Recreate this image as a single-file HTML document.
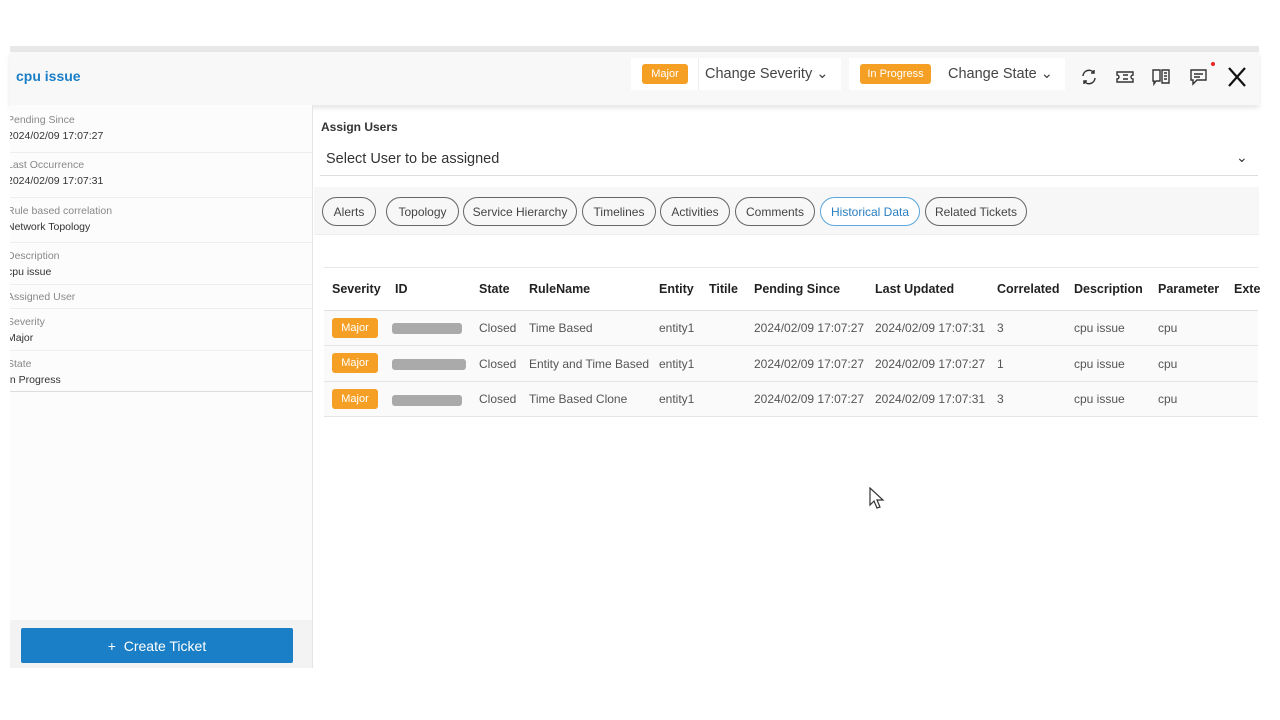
<!DOCTYPE html><html><head><style>
*{margin:0;padding:0;box-sizing:border-box}
body{width:1280px;height:720px;background:#fff;font-family:"Liberation Sans",sans-serif;position:relative;overflow:hidden;color:#333}
.a{position:absolute}
.lab{font-size:10.5px;color:#888;margin-left:-3px}
.val{font-size:10.5px;color:#333;margin-left:-3px}
.row{position:absolute;left:10px;width:302px;border-bottom:1px solid #eee;overflow:hidden}
.pill{position:absolute;top:197px;height:29px;border:1.5px solid #666;border-radius:15px;font-size:12px;color:#444;display:flex;align-items:center;justify-content:center}
.th{position:absolute;top:282px;font-size:12.5px;font-weight:bold;color:#222}
.td{position:absolute;font-size:12px;color:#555}
.badge{position:absolute;background:#f5a024;color:#fff;font-size:11px;border-radius:3px;display:flex;align-items:center;justify-content:center}
.blur{position:absolute;left:392px;height:11px;background:#aaa;border-radius:3px}
</style></head><body>
<div class="a" style="left:10px;top:46px;width:1249px;height:6px;background:#e8e8e8"></div>
<div class="a" style="left:10px;top:52px;width:1249px;height:53px;background:#f8f8f8;box-shadow:0 3px 5px rgba(0,0,0,.1)"></div>
<div class="a" style="left:16px;top:68px;font-size:14px;font-weight:bold;color:#1a7fc6">cpu issue</div>
<div class="a" style="left:631px;top:58px;width:210px;height:32px;background:#fff"></div>
<div class="a" style="left:698px;top:58px;width:1px;height:32px;background:#eee"></div>
<div class="badge" style="left:642px;top:64px;width:46px;height:20px">Major</div>
<div class="a" style="left:705px;top:66px;font-size:14.5px;color:#444">Change Severity ⌄</div>
<div class="a" style="left:849px;top:58px;width:216px;height:32px;background:#fff"></div>
<div class="badge" style="left:860px;top:64px;width:71px;height:20px">In Progress</div>
<div class="a" style="left:948px;top:66px;font-size:14.5px;color:#444">Change State ⌄</div>
<svg class="a" style="left:1080px;top:68px" width="18" height="18" viewBox="0 0 18 18" fill="none" stroke="#333" stroke-width="1.5"><path d="M3 8a6 6 0 0 1 11-3M15 10a6 6 0 0 1-11 3M14 2v3h-3M4 16v-3h3"/></svg>
<svg class="a" style="left:1116px;top:70px" width="18" height="14" viewBox="0 0 18 14" fill="none" stroke="#333" stroke-width="1.4"><path d="M1 2h16v3a2 2 0 0 0 0 4v3H1V9a2 2 0 0 0 0-4z"/><path d="M7 5h5M7 9h5"/></svg>
<svg class="a" style="left:1151px;top:68px" width="20" height="18" viewBox="0 0 20 18" fill="none" stroke="#333" stroke-width="1.4"><path d="M2 2h7v11H5l-2 3v-3H2zM11 2h7v13h-7zM13 5h3M13 8h3M13 11h3"/></svg>
<svg class="a" style="left:1189px;top:68px" width="19" height="18" viewBox="0 0 19 18" fill="none" stroke="#333" stroke-width="1.4"><path d="M2 2h15v10H8l-4 4v-4H2zM5 6h9M5 9h6"/></svg>
<div class="a" style="left:1211px;top:62px;width:4px;height:4px;border-radius:2px;background:#e22"></div>
<svg class="a" style="left:1228px;top:67px" width="18" height="20" viewBox="0 0 18 20" stroke="#111" stroke-width="2.2"><path d="M1 1l16 18M17 1L1 19"/></svg>

<div class="a" style="left:10px;top:105px;width:303px;height:563px;background:#fcfcfc;border-right:1px solid #e5e5e5"></div>
<div class="row" style="top:110px;height:43px"><div class="lab" style="margin-top:4px">Pending Since</div><div class="val" style="margin-top:4px">2024/02/09 17:07:27</div></div>
<div class="row" style="top:153px;height:45px"><div class="lab" style="margin-top:6px">Last Occurrence</div><div class="val" style="margin-top:4px">2024/02/09 17:07:31</div></div>
<div class="row" style="top:198px;height:45px"><div class="lab" style="margin-top:7px">Rule based correlation</div><div class="val" style="margin-top:4px">Network Topology</div></div>
<div class="row" style="top:243px;height:42px"><div class="lab" style="margin-top:7px">Description</div><div class="val" style="margin-top:4px">cpu issue</div></div>
<div class="row" style="top:285px;height:24px"><div class="lab" style="margin-top:6px">Assigned User</div></div>
<div class="row" style="top:309px;height:42px"><div class="lab" style="margin-top:7px">Severity</div><div class="val" style="margin-top:4px">Major</div></div>
<div class="row" style="top:351px;height:41px;border-color:#ddd"><div class="lab" style="margin-top:7px">State</div><div class="val" style="margin-top:4px">In Progress</div></div>
<div class="a" style="left:10px;top:620px;width:302px;height:48px;background:#f3f3f3"></div>
<div class="a" style="left:21px;top:628px;width:272px;height:35px;background:#1a7fc6;color:#fff;font-size:14px;display:flex;align-items:center;justify-content:center;border-radius:2px">+&nbsp; Create Ticket</div>

<div class="a" style="left:321px;top:120px;font-size:12px;font-weight:bold;color:#333">Assign Users</div>
<div class="a" style="left:326px;top:151px;font-size:14.5px;color:#333">Select User to be assigned</div>
<div class="a" style="left:1236px;top:149px;font-size:14px;color:#333">⌄</div>
<div class="a" style="left:320px;top:175px;width:938px;height:1px;background:#ddd"></div>
<div class="a" style="left:314px;top:187px;width:945px;height:48px;background:#f7f7f7;border-bottom:1px solid #eee"></div>
<div class="pill" style="left:322px;width:54px">Alerts</div>
<div class="pill" style="left:386px;width:73px">Topology</div>
<div class="pill" style="left:463px;width:114px">Service Hierarchy</div>
<div class="pill" style="left:582px;width:74px">Timelines</div>
<div class="pill" style="left:660px;width:70px">Activities</div>
<div class="pill" style="left:735px;width:80px">Comments</div>
<div class="pill" style="left:820px;width:100px;border-color:#5aa8dc;color:#2a7fc0;background:#fff">Historical Data</div>
<div class="pill" style="left:925px;width:102px">Related Tickets</div>

<div class="a" style="left:324px;top:267px;width:934px;height:1px;background:#e8e8e8"></div>
<div class="a" style="left:324px;top:310px;width:934px;height:1px;background:#e0e0e0"></div>
<div class="a" style="left:324px;top:311px;width:934px;height:105px;background:#fafafa"></div>
<div class="a" style="left:324px;top:345px;width:934px;height:1px;background:#e5e5e5"></div>
<div class="a" style="left:324px;top:381px;width:934px;height:1px;background:#e5e5e5"></div>
<div class="a" style="left:324px;top:416px;width:934px;height:1px;background:#e5e5e5"></div>
<div class="th" style="left:332px">Severity</div><div class="th" style="left:395px">ID</div><div class="th" style="left:479px">State</div><div class="th" style="left:529px">RuleName</div><div class="th" style="left:659px">Entity</div><div class="th" style="left:709px">Titile</div><div class="th" style="left:754px">Pending Since</div><div class="th" style="left:875px">Last Updated</div><div class="th" style="left:997px">Correlated</div><div class="th" style="left:1074px">Description</div><div class="th" style="left:1158px">Parameter</div><div class="th" style="left:1234px">Exte</div>

<div class="badge" style="left:332px;top:318px;width:46px;height:20px">Major</div>
<div class="blur" style="top:323px;width:70px"></div>
<div class="td" style="left:479px;top:321px">Closed</div><div class="td" style="left:529px;top:321px">Time Based</div><div class="td" style="left:659px;top:321px">entity1</div><div class="td" style="left:754px;top:321px">2024/02/09 17:07:27</div><div class="td" style="left:875px;top:321px">2024/02/09 17:07:31</div><div class="td" style="left:997px;top:321px">3</div><div class="td" style="left:1074px;top:321px">cpu issue</div><div class="td" style="left:1158px;top:321px">cpu</div>

<div class="badge" style="left:332px;top:353px;width:46px;height:20px">Major</div>
<div class="blur" style="top:359px;width:74px"></div>
<div class="td" style="left:479px;top:357px">Closed</div><div class="td" style="left:529px;top:357px">Entity and Time Based</div><div class="td" style="left:659px;top:357px">entity1</div><div class="td" style="left:754px;top:357px">2024/02/09 17:07:27</div><div class="td" style="left:875px;top:357px">2024/02/09 17:07:27</div><div class="td" style="left:997px;top:357px">1</div><div class="td" style="left:1074px;top:357px">cpu issue</div><div class="td" style="left:1158px;top:357px">cpu</div>

<div class="badge" style="left:332px;top:389px;width:46px;height:20px">Major</div>
<div class="blur" style="top:395px;width:70px"></div>
<div class="td" style="left:479px;top:392px">Closed</div><div class="td" style="left:529px;top:392px">Time Based Clone</div><div class="td" style="left:659px;top:392px">entity1</div><div class="td" style="left:754px;top:392px">2024/02/09 17:07:27</div><div class="td" style="left:875px;top:392px">2024/02/09 17:07:31</div><div class="td" style="left:997px;top:392px">3</div><div class="td" style="left:1074px;top:392px">cpu issue</div><div class="td" style="left:1158px;top:392px">cpu</div>

<svg class="a" style="left:869px;top:487px" width="16" height="22" viewBox="0 0 16 22"><path d="M1 1v17l4-4 3 7 3-1-3-7h6z" fill="#fff" stroke="#333" stroke-width="1.2"/></svg>
</body></html>
